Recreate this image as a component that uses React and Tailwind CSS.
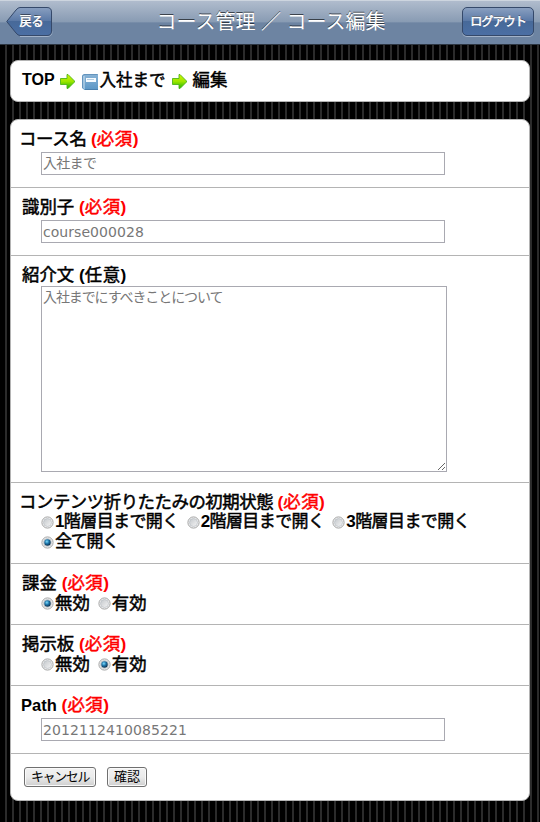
import React, { useState } from 'react';

const Latin = ({ className = '', children }) => (
  <span className={`font-bold [-webkit-text-stroke:0px] ${className}`}>{children}</span>
);

const Required = () => (
  <span className="tracking-normal text-[#ff0000]">
    <Latin>(</Latin>
    <span className="tracking-[0.5px]">必須</span>
    <Latin>)</Latin>
  </span>
);

const Arrow = () => (
  <svg width="15" height="15" viewBox="0 0 15 15" className="shrink-0">
    <defs>
      <linearGradient id="arrow" x1="0" y1="0" x2="0" y2="1">
        <stop offset="0" stopColor="#d4f400" />
        <stop offset="0.5" stopColor="#9be600" />
        <stop offset="1" stopColor="#1fb400" />
      </linearGradient>
    </defs>
    <path d="M.5 4.500h6.500v-4l1 0 6.500 6.500v1l-6.500 6.500h-1v-4h-6.500z" fill="url(#arrow)" stroke="#4fb51a" strokeWidth="0.9" />
  </svg>
);

const Book = () => (
  <svg width="16" height="16" viewBox="0 0 16 16" className="shrink-0">
    <defs>
      <linearGradient id="book" x1="0" y1="0" x2="0" y2="1">
        <stop offset="0" stopColor="#8ab4d6" />
        <stop offset="1" stopColor="#5a96c6" />
      </linearGradient>
    </defs>
    <path d="M0 1.5L1.5 0H16v16H2.5L0 14z" fill="url(#book)" />
    <path d="M.5 2v12M.5 2L2 .5h13.5" fill="none" stroke="#6494bd" />
    <path d="M1.5 2v12l1 1.500V2z" fill="#cfe3f1" />
    <rect x="4" y="4" width="10" height="4" fill="#f6fbff" />
    <path d="M5 5.5h7" stroke="#b5cfe2" />
    <path d="M3 15.5h13" stroke="#4a80ae" />
  </svg>
);

const Row = ({ className, children }) => (
  <li className={`box-border border-b border-[#b4b4b4] px-[10px] pt-[9px] ${className}`}>{children}</li>
);

const Label = ({ className = '', children }) => (
  <div className={`h-5 whitespace-pre text-[17.400px] leading-5 ${className}`}>{children}</div>
);

const TextInput = ({ value, className }) => (
  <input
    type="text"
    defaultValue={value}
    className={`ml-[20px] mt-[3px] block h-[23px] w-[404px] border border-[#a9a9b1] bg-white px-px py-0 text-[#777777] outline-none [-webkit-text-stroke:0px] ${className}`}
  />
);

const Radio = ({ name, checked, onChange, className = '', children }) => (
  <label className={`flex h-5 items-center whitespace-nowrap leading-5 ${className}`}>
    <input type="radio" name={name} checked={checked} onChange={onChange} className="sr-only" />
    <svg width="13" height="13" viewBox="0 0 13 13" className="mr-px shrink-0">
      <defs>
        <radialGradient id="dot" cx="0.4" cy="0.35" r="0.65">
          <stop offset="0" stopColor="#7fdcfb" />
          <stop offset="0.5" stopColor="#1f77ac" />
          <stop offset="1" stopColor="#0b2f4c" />
        </radialGradient>
        <linearGradient id="well" x1="0" y1="0" x2="1" y2="1">
          <stop offset="0" stopColor="#c3c7cb" />
          <stop offset="1" stopColor="#f5f5f5" />
        </linearGradient>
      </defs>
      <circle cx="6.5" cy="6.5" r="5.6" fill="#f4f4f4" stroke="#9a9b9b" strokeWidth="0.9" />
      <circle cx="6.5" cy="6.5" r="4" fill="url(#well)" stroke="#b9bec4" strokeWidth="0.7" />
      {checked && <circle cx="6.5" cy="6.5" r="3.2" fill="url(#dot)" />}
    </svg>
    <span>{children}</span>
  </label>
);

const formButton =
  'h-5 rounded-[3px] border border-[#707070] bg-linear-to-b from-[#f2f2f2] from-0% via-[#ebebeb] via-50% to-[#cfcfcf] p-0 text-[13px] leading-[18px] whitespace-nowrap shadow-[inset_0_0_0_1px_#fafafa] [-webkit-text-stroke:0px]';

const App = () => {
  const [fold, setFold] = useState('all');
  const [charge, setCharge] = useState('off');
  const [board, setBoard] = useState('on');

  return (
    <div className="h-[822px] w-[540px] overflow-hidden bg-black bg-[repeating-linear-gradient(90deg,#000_0px,#000_5px,#2b2b2b_5px,#2b2b2b_7px)] font-['Liberation_Sans','Noto_Sans_CJK_JP',sans-serif] text-[17px] font-normal text-black [-webkit-text-stroke:0.5px]">
      <header className="flex h-[45px] items-start justify-between border-t border-b border-t-[#cdd5df] border-b-[#2d3642] bg-[linear-gradient(180deg,#b0bccd_0px,#889bb3_21px,#8195af_21px,#6d84a2_22px,#6d84a2_43px)] pr-[6px] pl-[6px]">
        <button className="relative mt-[6px] h-[30px] w-[47px] p-0">
          <svg width="47" height="30" viewBox="0 0 47 30" className="absolute inset-0">
            <defs>
              <linearGradient id="back" x1="0" y1="0" x2="0" y2="1">
                <stop offset="0" stopColor="#899fc0" />
                <stop offset="0.5" stopColor="#5877a5" />
                <stop offset="0.5" stopColor="#476999" />
                <stop offset="1" stopColor="#4b6fa4" />
              </linearGradient>
            </defs>
            <path d="M14 29.5h27q5 0 5-5" fill="none" stroke="#a3b3c9" />
            <path d="M.7 14.5L10 3Q12 .5 14 .5h27q4.500 0 4.500 4.500v19q0 4.500-4.500 4.500H14q-2 0-4-2.500z" fill="url(#back)" stroke="#35496a" />
          </svg>
          <span className="relative block pl-[4px] text-center text-[12px] leading-[30px] text-white [text-shadow:0_-1px_0_rgba(0,0,0,0.6)]">
            戻る
          </span>
        </button>
        <h1 className="pl-[27px] text-[20px] leading-[42px] whitespace-pre text-white [-webkit-text-stroke:0px] [text-shadow:0_-1px_0_rgba(0,0,0,0.6)]">
          コース管理 ／ コース編集
        </h1>
        <button className="mt-[6px] h-[29px] w-[72px] rounded-[5px] border border-[#35496a] bg-[linear-gradient(180deg,#899fc0_0%,#5877a5_50%,#476999_50%,#4b6fa4_100%)] p-0 text-[12px] leading-[26px] tracking-[-0.9px] whitespace-nowrap text-white shadow-[0_1px_0_#a3b3c9] [text-shadow:0_-1px_0_rgba(0,0,0,0.6)]">
          ログアウト
        </button>
      </header>

      <nav className="mx-[10px] mt-[15px] flex h-[42px] items-center rounded-[8px] border border-[#b4b4b4] bg-white pb-[2px] pl-[11px] text-[16.500px] whitespace-nowrap">
        <Latin className="text-[16px]">TOP</Latin>
        <span className="mt-[3px] ml-[5px] flex"><Arrow /></span>
        <span className="mt-[4px] ml-[7px] flex"><Book /></span>
        <span className="ml-[2px]">入社まで</span>
        <span className="mt-[3px] ml-[6px] flex"><Arrow /></span>
        <span className="ml-[6px] text-[17.400px]">編集</span>
      </nav>

      <form className="mx-[10px] mt-[17px] h-[682px] rounded-[8px] border border-[#b4b4b4] bg-white" onSubmit={(e) => e.preventDefault()}>
        <ul>
          <Row className="h-[68px]">
            <Label className="-ml-[2px] tracking-[-0.3px]">コース名 <Required /></Label>
            <TextInput value="入社まで" className="pb-[3px] text-[14px] tracking-[-0.7px]" />
          </Row>
          <Row className="h-[68px]">
            <Label className="pl-px">識別子 <Required /></Label>
            <TextInput value="course000028" className="font-['DejaVu_Sans',sans-serif] text-[14px] tracking-[0.05px]" />
          </Row>
          <Row className="h-[227px]">
            <Label className="pl-px">
              紹介文 <Latin>(</Latin><span className="tracking-[0.5px]">任意</span><Latin>)</Latin>
            </Label>
            <textarea
              defaultValue="入社までにすべきことについて"
              className="mt-px ml-[20px] block h-[186px] w-[406px] resize border border-[#a9a9b1] bg-white px-px py-0 text-[14px] leading-[20px] tracking-[-1.1px] text-[#777777] outline-none [-webkit-text-stroke:0px]"
            />
          </Row>
          <Row className="h-[81px]">
            <Label className="-ml-[2px] tracking-[-0.45px]">コンテンツ折りたたみの初期状態 <Required /></Label>
            <div className="ml-[20px] flex flex-wrap gap-x-[8px] tracking-[-0.6px]">
              <Radio name="fold" checked={fold === '1'} onChange={() => setFold('1')}><Latin>1</Latin>階層目まで開く</Radio>
              <Radio name="fold" checked={fold === '2'} onChange={() => setFold('2')}><Latin>2</Latin>階層目まで開く</Radio>
              <Radio name="fold" checked={fold === '3'} onChange={() => setFold('3')}><Latin>3</Latin>階層目まで開く</Radio>
              <Radio name="fold" checked={fold === 'all'} onChange={() => setFold('all')} className="mr-40 tracking-[-1.200px]">全て開く</Radio>
            </div>
          </Row>
          <Row className="h-[61px]">
            <Label className="pl-px">課金 <Required /></Label>
            <div className="ml-[20px] flex gap-x-[8px] text-[17.400px]">
              <Radio name="charge" checked={charge === 'off'} onChange={() => setCharge('off')}>無効</Radio>
              <Radio name="charge" checked={charge === 'on'} onChange={() => setCharge('on')}>有効</Radio>
            </div>
          </Row>
          <Row className="h-[61px]">
            <Label className="pl-px">掲示板 <Required /></Label>
            <div className="ml-[20px] flex gap-x-[8px] text-[17.400px]">
              <Radio name="board" checked={board === 'off'} onChange={() => setBoard('off')}>無効</Radio>
              <Radio name="board" checked={board === 'on'} onChange={() => setBoard('on')}>有効</Radio>
            </div>
          </Row>
          <Row className="h-[68px]">
            <Label><Latin className="text-[16.500px]">Path</Latin> <Required /></Label>
            <TextInput value="2012112410085221" className="font-['DejaVu_Sans',sans-serif] text-[14px] tracking-[0.1px]" />
          </Row>
        </ul>
        <div className="flex gap-[11px] pt-[13px] pl-[13px]">
          <button className={`${formButton} w-[72px] tracking-[-1.4px]`}>キャンセル</button>
          <button className={`${formButton} w-[40px]`}>確認</button>
        </div>
      </form>
    </div>
  );
};

export default App;
